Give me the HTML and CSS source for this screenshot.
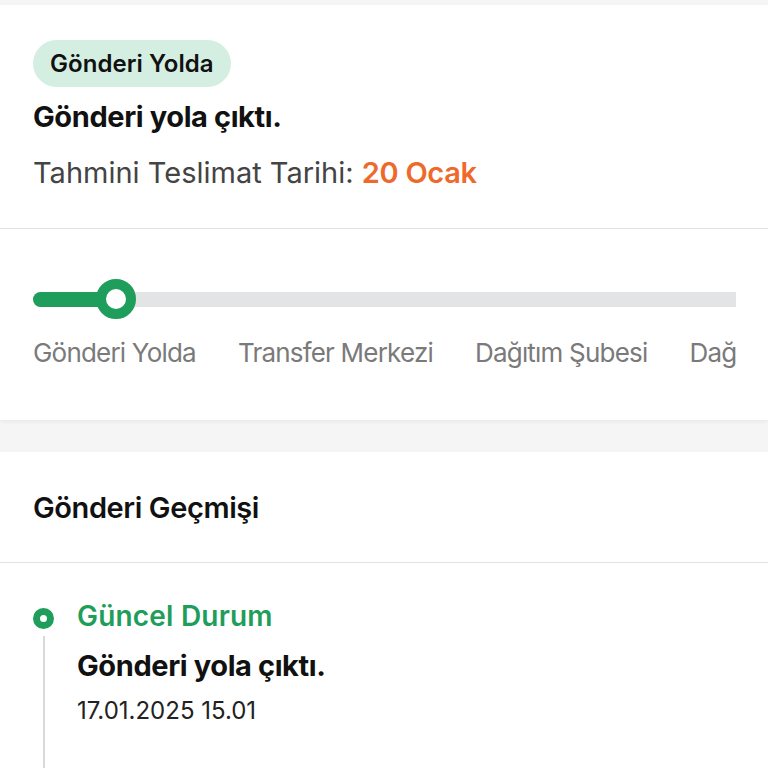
FILE: index.html
```html
<!DOCTYPE html>
<html lang="tr">
<head>
<meta charset="utf-8">
<link rel="stylesheet" href="styles.css">
</head>
<body>
<div class="page">
  <section class="card summary">
    <span class="badge">Gönderi Yolda</span>
    <h1 class="summary-title">Gönderi yola çıktı.</h1>
    <p class="eta">Tahmini Teslimat Tarihi: <span class="eta-date">20 Ocak</span></p>
  </section>

  <section class="card progress-card">
    <div class="progress-scroll">
      <div class="progress-inner">
        <div class="track-wrap">
          <div class="track">
            <div class="track-fill"></div>
          </div>
          <div class="knob"></div>
        </div>
        <div class="steps">
          <span class="step">Gönderi Yolda</span>
          <span class="step">Transfer Merkezi</span>
          <span class="step">Dağıtım Şubesi</span>
          <span class="step">Dağıtımda</span>
        </div>
      </div>
    </div>
  </section>

  <section class="card history">
    <h2 class="history-title">Gönderi Geçmişi</h2>
    <div class="timeline">
      <div class="event">
        <div class="rail">
          <span class="dot"></span>
          <span class="line"></span>
        </div>
        <div class="event-body">
          <div class="event-status">Güncel Durum</div>
          <div class="event-text">Gönderi yola çıktı.</div>
          <div class="event-date">17.01.2025 15.01</div>
        </div>
      </div>
    </div>
  </section>
</div>
</body>
</html>
```

FILE: styles.css
```css
* { box-sizing: border-box; }
html, body { margin: 0; padding: 0; }
body {
  background: #f5f5f5;
  font-family: Inter, "Noto Sans", "DejaVu Sans", sans-serif;
  color: #111;
}
.page {
  padding-top: 5px;
  display: flex;
  flex-direction: column;
}
.card { background: #fff; }

/* summary */
.summary {
  padding: 35px 33px 37px;
  border-bottom: 1px solid #e2e2e2;
  display: flex;
  flex-direction: column;
  align-items: flex-start;
}
.badge {
  display: inline-flex;
  align-items: center;
  height: 47px;
  padding: 0 17px;
  border-radius: 24px;
  background: #d4eee2;
  font-size: 24px;
  font-weight: 600;
  letter-spacing: 0.05px;
  color: #111;
}
.summary-title {
  margin: 12px 0 0;
  font-size: 29px;
  line-height: 36px;
  font-weight: 700;
  letter-spacing: -0.4px;
  color: #111;
}
.eta {
  margin: 20px 0 0;
  font-size: 29px;
  line-height: 36px;
  font-weight: 400;
  color: #444;
}
.eta-date { color: #ee6a2c; font-weight: 600; letter-spacing: -0.3px; }

/* progress */
.progress-card {
  padding: 50px 32px 51px 33px;
  box-shadow: 0 2px 4px rgba(0, 0, 0, 0.05);
  position: relative;
}
.progress-scroll { overflow: hidden; }
.progress-inner { width: 960px; }
.track-wrap {
  position: relative;
  height: 40px;
  display: flex;
  align-items: center;
}
.track {
  width: 100%;
  height: 15px;
  background: #e3e4e6;
  border-radius: 8px;
}
.track-fill {
  width: 84px;
  height: 100%;
  background: #1f9d5a;
  border-radius: 8px 0 0 8px;
}
.knob {
  position: absolute;
  left: 63px;
  top: 0;
  width: 40px;
  height: 40px;
  border-radius: 50%;
  background: #fff;
  border: 10px solid #1f9d5a;
}
.steps {
  display: flex;
  gap: 42px;
  margin-top: 18px;
  font-size: 26px;
  line-height: 32px;
  letter-spacing: -0.8px;
  color: #7a7a7a;
  white-space: nowrap;
}

/* history */
.history { margin-top: 32px; }
.history-title {
  margin: 0;
  padding: 38px 33px 36px;
  font-size: 29px;
  line-height: 36px;
  font-weight: 600;
  letter-spacing: -0.4px;
  color: #111;
  border-bottom: 1px solid #e2e2e2;
}
.timeline { padding: 36px 33px 0; }
.event { display: flex; gap: 23px; }
.rail {
  width: 21px;
  display: flex;
  flex-direction: column;
  align-items: center;
  padding-top: 9px;
}
.dot {
  width: 21px;
  height: 21px;
  border-radius: 50%;
  border: 7px solid #1f9d5a;
  background: #fff;
  flex: none;
}
.line {
  width: 2px;
  height: 160px;
  margin-top: 7px;
  background: #d9d9d9;
}
.event-body { display: flex; flex-direction: column; }
.event-status {
  font-size: 28px;
  line-height: 34px;
  font-weight: 600;
  letter-spacing: 0.2px;
  color: #1f9d5a;
}
.event-text {
  margin-top: 15px;
  font-size: 29px;
  line-height: 36px;
  font-weight: 700;
  letter-spacing: -0.4px;
  color: #111;
}
.event-date {
  margin-top: 12px;
  font-size: 24px;
  line-height: 30px;
  color: #222;
}
```
